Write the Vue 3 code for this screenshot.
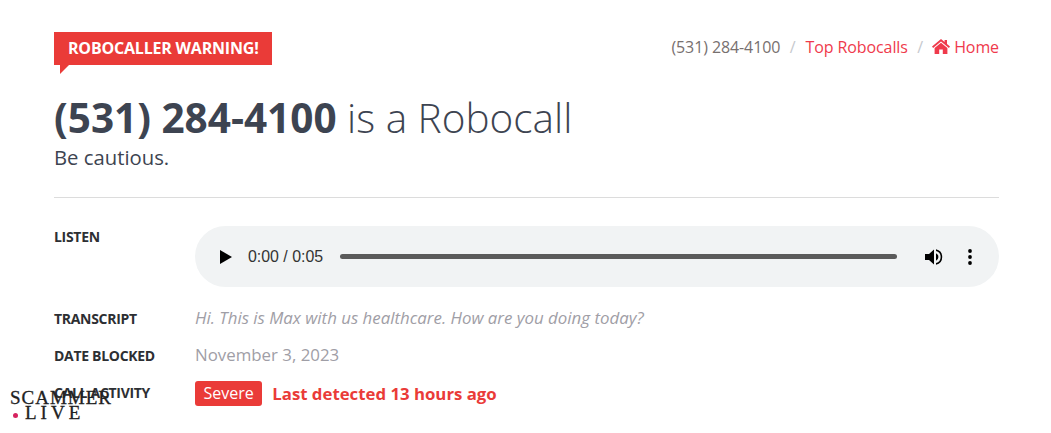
<script setup>
const rows = [
  { label: "Transcript", text: "Hi. This is Max with us healthcare. How are you doing today?", kind: "transcript" },
  { label: "Date Blocked", text: "November 3, 2023", kind: "date" },
];
</script>

<template>
  <div class="page">
    <header class="top">
      <div class="badge">ROBOCALLER WARNING!</div>
      <nav class="crumbs">
        <span class="current">(531) 284-4100</span>
        <span class="sep">/</span>
        <a class="link">Top Robocalls</a>
        <span class="sep sep-last">/</span>
        <a class="link home">
          <svg class="home-icon" viewBox="0 0 18 15" width="18" height="15">
            <path d="M9 0 L12.6 3 V1 H15 V5 L18 7.6 L16.9 8.9 L9 2.4 L1.1 8.9 L0 7.6 Z" fill="#ef3a4c" />
            <path d="M9 3.8 L15.4 9 V15 H10.8 V10.4 H7.2 V15 H2.6 V9 Z" fill="#ef3a4c" />
          </svg>
          Home
        </a>
      </nav>
    </header>

    <h1 class="title"><strong>(531) 284-4100</strong> is a Robocall</h1>
    <p class="sub">Be cautious.</p>
    <hr class="rule" />

    <section class="details">
      <div class="label label-listen">Listen</div>
      <div class="player">
        <svg class="play" viewBox="0 0 12 14" width="12" height="14"><path d="M0 0 L12 7 L0 14 Z" fill="#000" /></svg>
        <span class="time">0:00 / 0:05</span>
        <div class="track"></div>
        <svg class="volume" viewBox="0 0 20 20" width="20" height="20">
          <path d="M1 7 H5 L10 2.5 V17.5 L5 13 H1 Z" fill="#000" />
          <path d="M12 6.2 A4.2 4.2 0 0 1 12 13.8 Z" fill="#000" />
          <path d="M12 2.2 A8 8 0 0 1 12 17.8 V16 A6.2 6.2 0 0 0 12 4 Z" fill="#000" />
        </svg>
        <svg class="more" viewBox="0 0 4 16" width="4" height="16">
          <circle cx="2" cy="2" r="1.9" fill="#000" />
          <circle cx="2" cy="8" r="1.9" fill="#000" />
          <circle cx="2" cy="14" r="1.9" fill="#000" />
        </svg>
      </div>

      <template v-for="row in rows" :key="row.label">
        <div class="label" :class="'label-' + row.kind">{{ row.label }}</div>
        <div :class="row.kind">{{ row.text }}</div>
      </template>

      <div class="label label-activity">Call Activity</div>
      <div class="activity">
        <span class="severe">Severe</span>
        <span class="detected">Last detected 13 hours ago</span>
      </div>
    </section>

    <div class="watermark">
      <div class="wm-line">SCAMMER</div>
      <div class="wm-line wm-second"><i class="dot"></i>LIVE</div>
    </div>
  </div>
</template>

<style scoped>
.page {
  position: relative;
  box-sizing: border-box;
  height: 433px;
  padding: 32px 52px 0 54px;
  background: #fff;
  overflow: hidden;
  font-family: "Open Sans", sans-serif;
  color: #3d4451;
}
.top {
  display: flex;
  justify-content: space-between;
  align-items: flex-start;
}
.badge {
  position: relative;
  height: 33px;
  line-height: 33px;
  padding: 0 13.5px 0 14px;
  background: #ea3b38;
  color: #fff;
  font-size: 16px;
  font-weight: 700;
  letter-spacing: -0.2px;
}
.badge::after {
  content: "";
  position: absolute;
  left: 6px;
  top: 33px;
  border-style: solid;
  border-width: 9px 9px 0 0;
  border-color: #ea3b38 transparent transparent transparent;
}
.crumbs {
  display: flex;
  align-items: center;
  height: 30px;
  font-size: 16px;
  letter-spacing: -0.1px;
}
.current {
  color: #77706f;
}
.sep {
  margin: 0 10px 0 9.5px;
  color: #c6c9ce;
}
.sep-last {
  margin-right: 9px;
}
.link {
  color: #ef3a4c;
}
.home-icon {
  vertical-align: -1px;
}
.title {
  margin: 26px 0 0;
  font-size: 40.5px;
  line-height: 54px;
  font-weight: 300;
}
.title strong {
  font-weight: 700;
}
.sub {
  margin: 0;
  font-size: 20.3px;
  line-height: 24px;
}
.rule {
  margin: 28px 0 28px;
  border: 0;
  border-top: 1px solid #dcdcdc;
}
.details {
  display: grid;
  grid-template-columns: 141px 1fr;
  align-items: center;
}
.label {
  font-size: 14px;
  font-weight: 700;
  letter-spacing: -0.3px;
  text-transform: uppercase;
  color: #2d2f33;
}
.label-listen {
  align-self: start;
  line-height: 22px;
}
.label-transcript {
  margin-top: 12px;
}
.label-activity {
  margin-bottom: 2px;
}
.player {
  display: flex;
  align-items: center;
  height: 61px;
  padding: 0 27px 0 25px;
  border-radius: 31px;
  background: #f1f3f4;
  font-family: "Liberation Sans", sans-serif;
}
.time {
  margin-left: 16px;
  font-size: 15.9px;
  color: #333;
}
.track {
  flex: 1;
  height: 5px;
  margin: 0 27px 0 17px;
  border-radius: 3px;
  background: #5a5a5a;
}
.more {
  margin-left: 24px;
}
.transcript,
.date {
  font-size: 16.85px;
  color: #9f9ea6;
}
.transcript {
  height: 38px;
  line-height: 38px;
  margin-top: 12px;
  font-style: italic;
}
.date {
  height: 36px;
  line-height: 36px;
}
.activity {
  display: flex;
  align-items: center;
  height: 40px;
}
.severe {
  height: 25px;
  line-height: 25px;
  padding: 0 8.5px;
  border-radius: 3px;
  background: #ea3b38;
  color: #fff;
  font-size: 16px;
}
.detected {
  margin-left: 10px;
  color: #ea3b38;
  font-size: 16.8px;
  font-weight: 700;
}
.watermark {
  position: absolute;
  left: 10px;
  top: 390px;
  font-family: "Liberation Serif", serif;
  font-size: 19px;
  line-height: 15px;
  letter-spacing: 1px;
  color: #222;
  -webkit-text-stroke: 0.3px #222;
}
.wm-second {
  display: flex;
  align-items: center;
  letter-spacing: 4px;
}
.dot {
  width: 5px;
  height: 5px;
  margin: 6px 7px 0 3px;
  border-radius: 50%;
  background: #d6235f;
  -webkit-text-stroke: 0;
}
</style>
